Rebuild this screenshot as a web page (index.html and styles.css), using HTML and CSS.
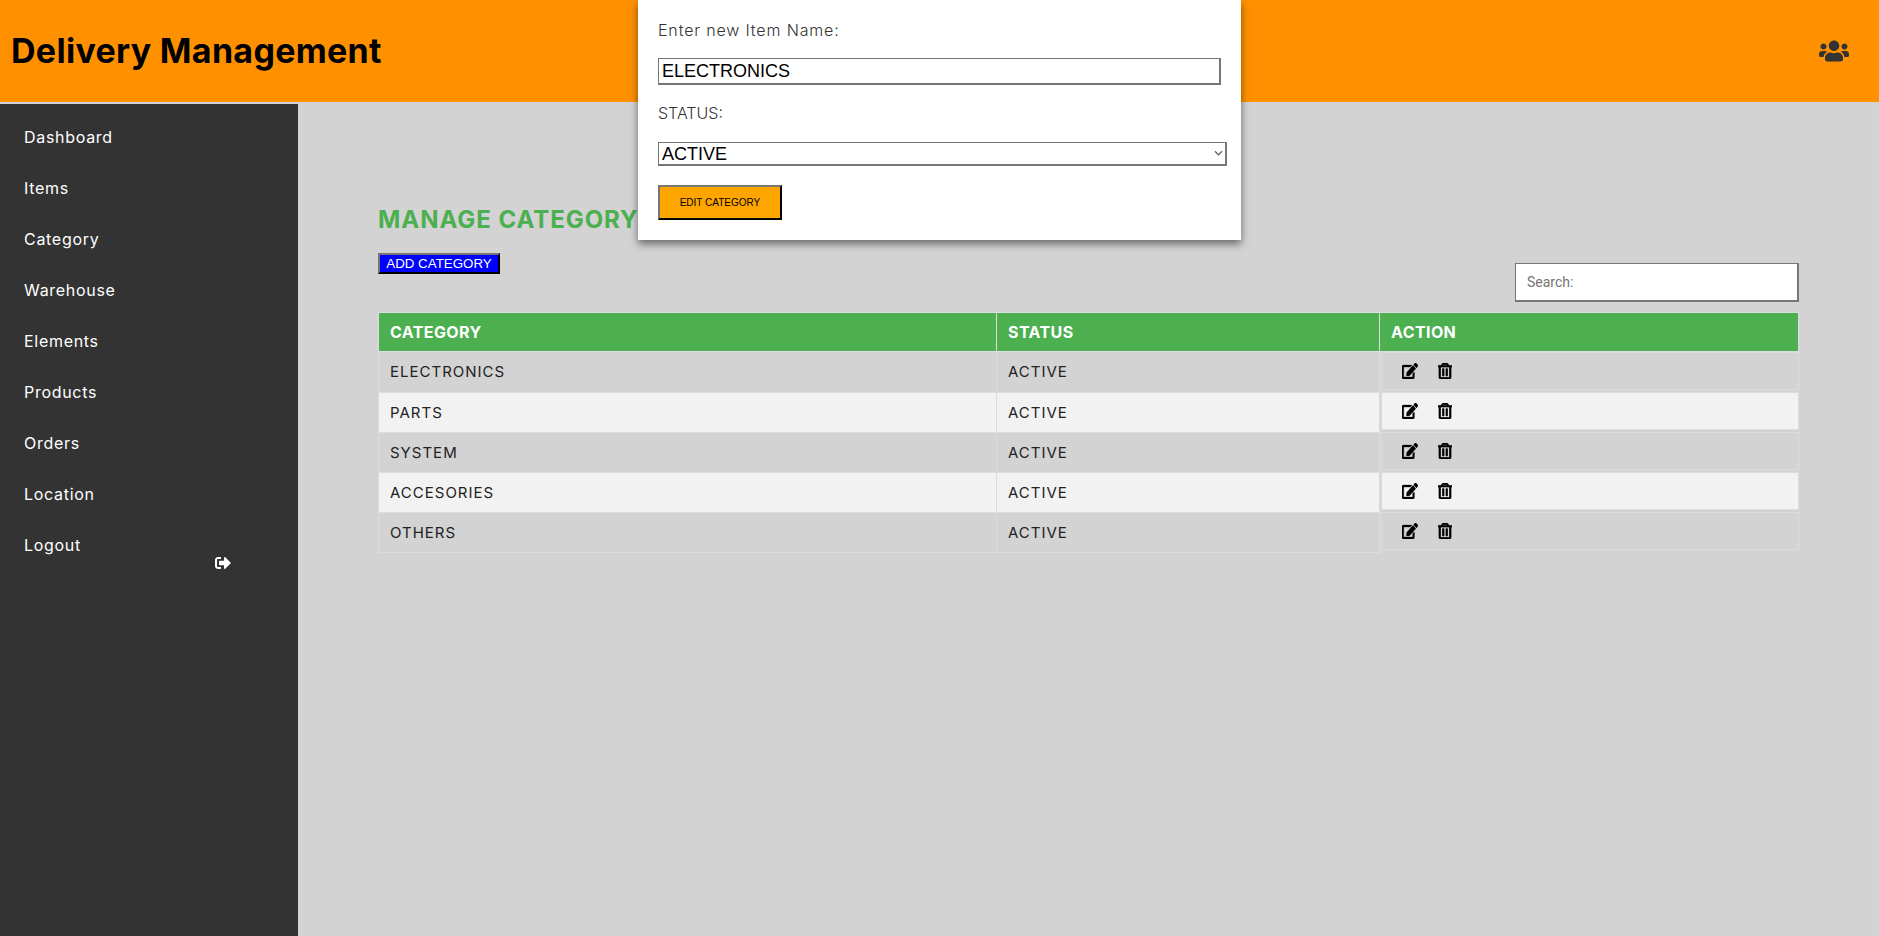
FILE: index.html
```html
<!DOCTYPE html>
<html lang="en">
<head>
<meta charset="utf-8">
<title>Delivery Management</title>
<link rel="stylesheet" href="styles.css">
</head>
<body>
<header class="topbar">
  <h1 class="brand">Delivery Management</h1>
  <svg class="users-icon" viewBox="0 0 640 512"><path d="M96 224c35.3 0 64-28.7 64-64s-28.7-64-64-64-64 28.7-64 64 28.7 64 64 64zm448 0c35.3 0 64-28.7 64-64s-28.7-64-64-64-64 28.7-64 64 28.7 64 64 64zm32 32h-64c-17.6 0-33.5 7.1-45.1 18.6 40.3 22.1 68.9 62 75.1 109.4h66c17.7 0 32-14.3 32-32v-32c0-35.3-28.7-64-64-64zm-256 0c61.9 0 112-50.1 112-112S381.9 32 320 32 208 82.1 208 144s50.1 112 112 112zm76.8 32h-8.3c-20.8 10-43.9 16-68.5 16s-47.6-6-68.5-16h-8.3C179.6 288 128 339.6 128 403.2V432c0 26.5 21.5 48 48 48h288c26.5 0 48-21.5 48-48v-28.8c0-63.6-51.6-115.2-115.2-115.2zm-223.7-13.4C161.5 263.1 145.6 256 128 256H64c-35.3 0-64 28.7-64 64v32c0 17.7 14.3 32 32 32h65.9c6.3-47.4 34.9-87.3 75.2-109.4z"/></svg>
</header>
<div class="layout">
  <nav class="sidebar">
    <a class="nav-link">Dashboard</a>
    <a class="nav-link">Items</a>
    <a class="nav-link">Category</a>
    <a class="nav-link">Warehouse</a>
    <a class="nav-link">Elements</a>
    <a class="nav-link">Products</a>
    <a class="nav-link">Orders</a>
    <a class="nav-link">Location</a>
    <a class="nav-link">Logout</a>
    <svg class="logout-icon" viewBox="0 0 512 512"><path d="M497 273L329 441c-15 15-41 4.500-41-17v-96H152c-13.300 0-24-10.700-24-24v-96c0-13.300 10.700-24 24-24h136V88c0-21.400 25.900-32 41-17l168 168c9.300 9.400 9.300 24.600 0 34zM192 436v-40c0-6.600-5.400-12-12-12H96c-17.700 0-32-14.300-32-32V160c0-17.700 14.300-32 32-32h84c6.600 0 12-5.400 12-12V76c0-6.600-5.400-12-12-12H96c-53 0-96 43-96 96v192c0 53 43 96 96 96h84c6.600 0 12-5.400 12-12z"/></svg>
  </nav>
  <main class="content">
    <h2 class="page-title">MANAGE CATEGORY</h2>
    <div class="toolbar">
      <button class="add-btn">ADD CATEGORY</button>
      <input class="search" type="text" placeholder="Search:">
    </div>
    <table class="grid">
      <colgroup><col class="col-a"><col class="col-b"><col></colgroup>
      <thead>
        <tr><th>CATEGORY</th><th>STATUS</th><th>ACTION</th></tr>
      </thead>
      <tbody>
        <tr><td>ELECTRONICS</td><td>ACTIVE</td><td class="action-cell"><div class="actions">
          <svg class="ico-edit" viewBox="0 0 576 512" preserveAspectRatio="none"><path d="M402.600 83.200l90.200 90.200c3.800 3.800 3.800 10 0 13.800L274.400 405.600l-92.800 10.300c-12.400 1.400-22.900-9.100-21.500-21.500l10.300-92.800L388.800 83.200c3.800-3.800 10-3.800 13.800 0zm162-22.900l-48.800-48.800c-15.200-15.200-39.900-15.200-55.200 0l-35.400 35.400c-3.800 3.800-3.800 10 0 13.800l90.200 90.200c3.800 3.800 10 3.800 13.800 0l35.400-35.400c15.200-15.300 15.200-40 0-55.200zM384 346.200V448H64V128h229.800c3.200 0 6.200-1.300 8.500-3.500l40-40c7.600-7.600 2.200-20.500-8.500-20.500H48C21.500 64 0 85.500 0 112v352c0 26.500 21.500 48 48 48h352c26.500 0 48-21.500 48-48V306.200c0-10.700-12.900-16-20.500-8.500l-40 40c-2.200 2.300-3.500 5.300-3.500 8.500z"/></svg>
          <svg class="ico-trash" viewBox="0 0 448 512"><path d="M268 416h24a12 12 0 0 0 12-12V188a12 12 0 0 0-12-12h-24a12 12 0 0 0-12 12v216a12 12 0 0 0 12 12zM432 80h-82.410l-34-56.700A48 48 0 0 0 274.410 0H173.590a48 48 0 0 0-41.160 23.300L98.410 80H16A16 16 0 0 0 0 96v16a16 16 0 0 0 16 16h16v336a48 48 0 0 0 48 48h288a48 48 0 0 0 48-48V128h16a16 16 0 0 0 16-16V96a16 16 0 0 0-16-16zM171.840 50.910A6 6 0 0 1 177 48h94a6 6 0 0 1 5.150 2.910L293.610 80H154.390zM368 464H80V128h288zm-212-48h24a12 12 0 0 0 12-12V188a12 12 0 0 0-12-12h-24a12 12 0 0 0-12 12v216a12 12 0 0 0 12 12z"/></svg>
        </div></td></tr>
        <tr><td>PARTS</td><td>ACTIVE</td><td class="action-cell"><div class="actions">
          <svg class="ico-edit" viewBox="0 0 576 512" preserveAspectRatio="none"><path d="M402.600 83.200l90.200 90.200c3.800 3.800 3.800 10 0 13.800L274.400 405.600l-92.800 10.300c-12.400 1.400-22.900-9.100-21.500-21.500l10.300-92.800L388.800 83.200c3.800-3.800 10-3.800 13.800 0zm162-22.900l-48.800-48.800c-15.200-15.200-39.900-15.200-55.200 0l-35.400 35.400c-3.800 3.800-3.800 10 0 13.800l90.200 90.200c3.800 3.800 10 3.800 13.800 0l35.400-35.400c15.200-15.300 15.200-40 0-55.200zM384 346.200V448H64V128h229.800c3.200 0 6.200-1.300 8.500-3.500l40-40c7.600-7.600 2.200-20.500-8.500-20.500H48C21.500 64 0 85.500 0 112v352c0 26.500 21.500 48 48 48h352c26.500 0 48-21.500 48-48V306.200c0-10.700-12.900-16-20.500-8.500l-40 40c-2.200 2.300-3.500 5.300-3.500 8.500z"/></svg>
          <svg class="ico-trash" viewBox="0 0 448 512"><path d="M268 416h24a12 12 0 0 0 12-12V188a12 12 0 0 0-12-12h-24a12 12 0 0 0-12 12v216a12 12 0 0 0 12 12zM432 80h-82.410l-34-56.700A48 48 0 0 0 274.410 0H173.590a48 48 0 0 0-41.160 23.300L98.410 80H16A16 16 0 0 0 0 96v16a16 16 0 0 0 16 16h16v336a48 48 0 0 0 48 48h288a48 48 0 0 0 48-48V128h16a16 16 0 0 0 16-16V96a16 16 0 0 0-16-16zM171.840 50.910A6 6 0 0 1 177 48h94a6 6 0 0 1 5.150 2.910L293.610 80H154.390zM368 464H80V128h288zm-212-48h24a12 12 0 0 0 12-12V188a12 12 0 0 0-12-12h-24a12 12 0 0 0-12 12v216a12 12 0 0 0 12 12z"/></svg>
        </div></td></tr>
        <tr><td>SYSTEM</td><td>ACTIVE</td><td class="action-cell"><div class="actions">
          <svg class="ico-edit" viewBox="0 0 576 512" preserveAspectRatio="none"><path d="M402.600 83.200l90.200 90.200c3.800 3.800 3.800 10 0 13.800L274.400 405.600l-92.800 10.300c-12.400 1.400-22.900-9.100-21.500-21.500l10.300-92.800L388.800 83.200c3.800-3.800 10-3.800 13.800 0zm162-22.900l-48.800-48.800c-15.200-15.200-39.900-15.200-55.200 0l-35.400 35.400c-3.800 3.800-3.800 10 0 13.800l90.200 90.200c3.800 3.800 10 3.800 13.800 0l35.400-35.400c15.200-15.300 15.200-40 0-55.200zM384 346.200V448H64V128h229.800c3.200 0 6.200-1.300 8.500-3.500l40-40c7.600-7.600 2.200-20.500-8.500-20.500H48C21.500 64 0 85.500 0 112v352c0 26.500 21.500 48 48 48h352c26.500 0 48-21.500 48-48V306.200c0-10.700-12.900-16-20.500-8.500l-40 40c-2.200 2.300-3.500 5.300-3.500 8.500z"/></svg>
          <svg class="ico-trash" viewBox="0 0 448 512"><path d="M268 416h24a12 12 0 0 0 12-12V188a12 12 0 0 0-12-12h-24a12 12 0 0 0-12 12v216a12 12 0 0 0 12 12zM432 80h-82.410l-34-56.700A48 48 0 0 0 274.410 0H173.590a48 48 0 0 0-41.160 23.300L98.410 80H16A16 16 0 0 0 0 96v16a16 16 0 0 0 16 16h16v336a48 48 0 0 0 48 48h288a48 48 0 0 0 48-48V128h16a16 16 0 0 0 16-16V96a16 16 0 0 0-16-16zM171.840 50.910A6 6 0 0 1 177 48h94a6 6 0 0 1 5.150 2.910L293.610 80H154.390zM368 464H80V128h288zm-212-48h24a12 12 0 0 0 12-12V188a12 12 0 0 0-12-12h-24a12 12 0 0 0-12 12v216a12 12 0 0 0 12 12z"/></svg>
        </div></td></tr>
        <tr><td>ACCESORIES</td><td>ACTIVE</td><td class="action-cell"><div class="actions">
          <svg class="ico-edit" viewBox="0 0 576 512" preserveAspectRatio="none"><path d="M402.600 83.200l90.200 90.200c3.800 3.800 3.800 10 0 13.800L274.400 405.600l-92.800 10.300c-12.400 1.400-22.900-9.100-21.500-21.500l10.300-92.800L388.800 83.200c3.800-3.800 10-3.800 13.800 0zm162-22.900l-48.800-48.800c-15.200-15.200-39.900-15.200-55.200 0l-35.400 35.400c-3.800 3.800-3.800 10 0 13.800l90.200 90.200c3.800 3.800 10 3.800 13.800 0l35.400-35.400c15.200-15.300 15.200-40 0-55.200zM384 346.200V448H64V128h229.800c3.200 0 6.200-1.300 8.500-3.500l40-40c7.600-7.600 2.200-20.500-8.500-20.500H48C21.500 64 0 85.500 0 112v352c0 26.500 21.500 48 48 48h352c26.500 0 48-21.500 48-48V306.200c0-10.700-12.900-16-20.500-8.500l-40 40c-2.200 2.300-3.500 5.300-3.500 8.500z"/></svg>
          <svg class="ico-trash" viewBox="0 0 448 512"><path d="M268 416h24a12 12 0 0 0 12-12V188a12 12 0 0 0-12-12h-24a12 12 0 0 0-12 12v216a12 12 0 0 0 12 12zM432 80h-82.410l-34-56.700A48 48 0 0 0 274.410 0H173.590a48 48 0 0 0-41.160 23.300L98.410 80H16A16 16 0 0 0 0 96v16a16 16 0 0 0 16 16h16v336a48 48 0 0 0 48 48h288a48 48 0 0 0 48-48V128h16a16 16 0 0 0 16-16V96a16 16 0 0 0-16-16zM171.840 50.910A6 6 0 0 1 177 48h94a6 6 0 0 1 5.150 2.910L293.610 80H154.390zM368 464H80V128h288zm-212-48h24a12 12 0 0 0 12-12V188a12 12 0 0 0-12-12h-24a12 12 0 0 0-12 12v216a12 12 0 0 0 12 12z"/></svg>
        </div></td></tr>
        <tr><td>OTHERS</td><td>ACTIVE</td><td class="action-cell"><div class="actions">
          <svg class="ico-edit" viewBox="0 0 576 512" preserveAspectRatio="none"><path d="M402.600 83.200l90.200 90.200c3.800 3.800 3.800 10 0 13.800L274.400 405.600l-92.800 10.300c-12.400 1.400-22.900-9.100-21.500-21.500l10.300-92.800L388.800 83.200c3.800-3.800 10-3.800 13.800 0zm162-22.900l-48.800-48.800c-15.200-15.200-39.900-15.200-55.200 0l-35.400 35.400c-3.800 3.800-3.800 10 0 13.800l90.200 90.200c3.800 3.800 10 3.800 13.800 0l35.400-35.400c15.200-15.300 15.200-40 0-55.200zM384 346.200V448H64V128h229.800c3.200 0 6.200-1.300 8.500-3.500l40-40c7.600-7.600 2.200-20.500-8.500-20.500H48C21.500 64 0 85.500 0 112v352c0 26.500 21.500 48 48 48h352c26.500 0 48-21.500 48-48V306.200c0-10.700-12.900-16-20.500-8.500l-40 40c-2.200 2.300-3.500 5.300-3.500 8.500z"/></svg>
          <svg class="ico-trash" viewBox="0 0 448 512"><path d="M268 416h24a12 12 0 0 0 12-12V188a12 12 0 0 0-12-12h-24a12 12 0 0 0-12 12v216a12 12 0 0 0 12 12zM432 80h-82.410l-34-56.700A48 48 0 0 0 274.410 0H173.590a48 48 0 0 0-41.160 23.300L98.410 80H16A16 16 0 0 0 0 96v16a16 16 0 0 0 16 16h16v336a48 48 0 0 0 48 48h288a48 48 0 0 0 48-48V128h16a16 16 0 0 0 16-16V96a16 16 0 0 0-16-16zM171.840 50.910A6 6 0 0 1 177 48h94a6 6 0 0 1 5.150 2.910L293.610 80H154.390zM368 464H80V128h288zm-212-48h24a12 12 0 0 0 12-12V188a12 12 0 0 0-12-12h-24a12 12 0 0 0-12 12v216a12 12 0 0 0 12 12z"/></svg>
        </div></td></tr>
      </tbody>
    </table>
  </main>
</div>
<form class="modal">
  <label class="modal-label">Enter new Item Name:</label>
  <input class="modal-input" type="text" value="ELECTRONICS">
  <label class="modal-label status-label">STATUS:</label>
  <div class="select-wrap">
    <select class="modal-select"><option>ACTIVE</option></select>
    <svg class="select-arrow" viewBox="0 0 10 6"><path d="M1 1l4 4 4-4"/></svg>
  </div>
  <button class="edit-btn" type="button">EDIT CATEGORY</button>
</form>
</body>
</html>
```
FILE: styles.css
```css
* { box-sizing: border-box; }
html, body { height: 100%; }
body {
  margin: 0;
  height: 936px;
  overflow: hidden;
  display: flex;
  flex-direction: column;
  background: #d3d3d3;
  font-family: Inter, "Open Sans", sans-serif;
  color: #222;
}
.topbar {
  height: 102px;
  flex: none;
  background: #ff9100;
  display: flex;
  align-items: center;
  justify-content: space-between;
  padding: 0 30px 0 11px;
}
.brand {
  margin: 0 0 2px;
  font-size: 34px;
  font-weight: 700;
  color: #000;
  letter-spacing: 0.3px;
}
.users-icon { width: 30px; height: 24px; fill: #333; }
.layout {
  flex: 1;
  display: flex;
  margin-top: 2px;
  min-height: 0;
}
.sidebar {
  width: 298px;
  flex: none;
  background: #333;
  padding-top: 8px;
  display: flex;
  flex-direction: column;
}
.nav-link {
  height: 51px;
  line-height: 51px;
  padding-left: 24px;
  font-size: 16px;
  letter-spacing: 0.7px;
  color: #fff;
}
.logout-icon {
  width: 16px;
  height: 16px;
  fill: #fff;
  margin: -16px 0 0 215px;
}
.content {
  flex: 1;
  padding: 102px 80px 0 80px;
}
.page-title {
  margin: 0 0 19px;
  font-size: 24px;
  line-height: 28px;
  font-weight: 700;
  letter-spacing: 0.95px;
  color: #4caf50;
}
.toolbar {
  height: 59px;
  display: flex;
  justify-content: space-between;
  align-items: flex-end;
}
.add-btn {
  align-self: flex-start;
  width: 122px;
  height: 21px;
  padding: 0;
  background: #0000ff;
  border: 2px outset #222;
  font: 13.33px "Liberation Sans", sans-serif;
  color: #fff;
}
.search {
  width: 284px;
  height: 39px;
  margin-bottom: 10px;
  padding: 0 11px;
  background: #fff;
  border: 2px solid #767676;
  border-width: 1px 2px 2px 1px;
  font: 14px Roboto, sans-serif;
}
.search::placeholder { color: #757575; }
.grid {
  width: 1421px;
  table-layout: fixed;
  border-collapse: collapse;
  font-size: 15px;
  letter-spacing: 1px;
}
.col-a { width: 618px; }
.col-b { width: 383px; }
.grid th {
  height: 39px;
  padding: 0 11px;
  text-align: left;
  background: #4caf50;
  color: #fff;
  font-size: 16px;
  font-weight: 700;
  border: 1px solid #ddd;
  letter-spacing: 0.4px;
}
.grid td {
  height: 39px;
  padding: 0 11px;
  border: 1px solid #ddd;
}
.grid tbody tr:nth-child(even) { background: #f2f2f2; }
.grid td.action-cell {
  padding: 0 0 0 1px;
  border: 0;
  background: #d3d3d3;
}
.actions {
  height: 38px;
  margin-bottom: 2px;
  padding-left: 20px;
  display: flex;
  align-items: center;
  gap: 20px;
  border: 1px solid #ddd;
}
.grid tbody tr:nth-child(even) .actions { background: #f2f2f2; }
.ico-edit { width: 16px; height: 16px; fill: #000; stroke: #000; stroke-width: 10; }
.ico-trash { width: 14px; height: 16px; fill: #000; stroke: #000; stroke-width: 22; }
.modal {
  position: absolute;
  left: 638px;
  top: 0;
  width: 603px;
  height: 240px;
  padding: 21px 20px 20px;
  background: #fff;
  box-shadow: 0 4px 8px rgba(0, 0, 0, 0.5);
  display: flex;
  flex-direction: column;
  align-items: flex-start;
}
.modal-label {
  font-size: 16px;
  line-height: 18px;
  font-weight: 300;
  letter-spacing: 0.85px;
  color: #333;
}
.status-label { margin-top: 19px; letter-spacing: 0; }
.modal-input {
  width: 563px;
  height: 27px;
  margin-top: 19px;
  padding: 0 3px;
  background: #fff;
  border: 1px solid #767676;
  border-width: 1px 2px 2px 1px;
  font: 18px "Liberation Sans", sans-serif;
  color: #000;
}
.select-wrap {
  position: relative;
  margin-top: 20px;
  display: flex;
}
.modal-select {
  width: 569px;
  height: 24px;
  padding: 0 0 0 3px;
  appearance: none;
  background: #fff;
  border: 1px solid #767676;
  border-width: 1px 2px 2px 1px;
  font: 18px "Liberation Sans", sans-serif;
  color: #000;
  border-radius: 0;
}
.select-arrow {
  position: absolute;
  right: 4px;
  top: 8px;
  width: 9px;
  height: 6px;
  fill: none;
  stroke: #666;
  stroke-width: 1.4;
}
.edit-btn {
  width: 124px;
  height: 35px;
  margin-top: 19px;
  padding: 0;
  background: #ffa500;
  border: 2px outset #222;
  font: 10px "Liberation Sans", sans-serif;
  color: #000;
}
```
